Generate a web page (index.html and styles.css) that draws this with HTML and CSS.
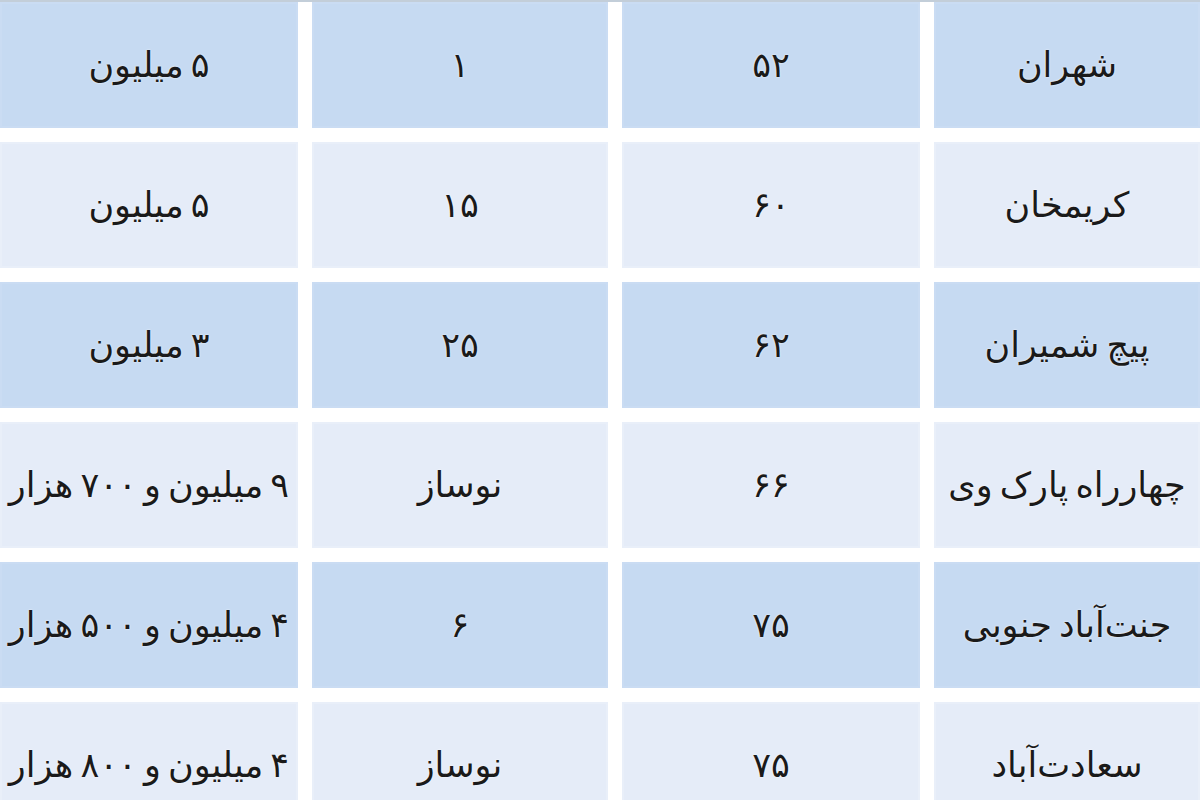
FILE: index.html
```html
<!DOCTYPE html>
<html lang="fa" dir="rtl">
<head>
<meta charset="utf-8">
<title>جدول</title>
<link rel="stylesheet" href="styles.css">
</head>
<body>
<div class="table">
  <div class="row dark">
    <div class="cell">شهران</div>
    <div class="cell">۵۲</div>
    <div class="cell">۱</div>
    <div class="cell">۵ میلیون</div>
  </div>
  <div class="row light">
    <div class="cell">کریمخان</div>
    <div class="cell">۶۰</div>
    <div class="cell">۱۵</div>
    <div class="cell">۵ میلیون</div>
  </div>
  <div class="row dark">
    <div class="cell">پیچ شمیران</div>
    <div class="cell">۶۲</div>
    <div class="cell">۲۵</div>
    <div class="cell">۳ میلیون</div>
  </div>
  <div class="row light">
    <div class="cell">چهارراه پارک وی</div>
    <div class="cell">۶۶</div>
    <div class="cell">نوساز</div>
    <div class="cell">۹ میلیون و ۷۰۰ هزار</div>
  </div>
  <div class="row dark">
    <div class="cell">جنت‌آباد جنوبی</div>
    <div class="cell">۷۵</div>
    <div class="cell">۶</div>
    <div class="cell">۴ میلیون و ۵۰۰ هزار</div>
  </div>
  <div class="row light">
    <div class="cell">سعادت‌آباد</div>
    <div class="cell">۷۵</div>
    <div class="cell">نوساز</div>
    <div class="cell">۴ میلیون و ۸۰۰ هزار</div>
  </div>
</div>
</body>
</html>
```
FILE: styles.css
```css
html, body {
  margin: 0;
  padding: 0;
  background: #ffffff;
  width: 1200px;
  height: 800px;
  overflow: hidden;
}

body {
  font-family: "DejaVu Sans", "Noto Sans", sans-serif;
  color: #1a1a1a;
  direction: rtl;
}

.table {
  display: flex;
  flex-direction: column;
  gap: 14px;
  border-top: 2px solid #c3ced9;
  width: 1200px;
}

.row {
  display: grid;
  grid-template-columns: 266px 298px 296px 298px;
  column-gap: 14px;
  height: 126px;
}

.cell {
  display: flex;
  align-items: center;
  justify-content: safe center;
  white-space: nowrap;
  font-size: 35px;
  word-spacing: -4px;
  text-shadow: 0 0 2px #ffffff;
  min-width: 0;
}

.dark .cell {
  background: #c6daf2;
  box-shadow: inset 0 0 0 2px #cadcf3;
}

.light .cell {
  background: #e5ecf8;
  box-shadow: inset 0 0 0 2px #e9eff9;
}
```
